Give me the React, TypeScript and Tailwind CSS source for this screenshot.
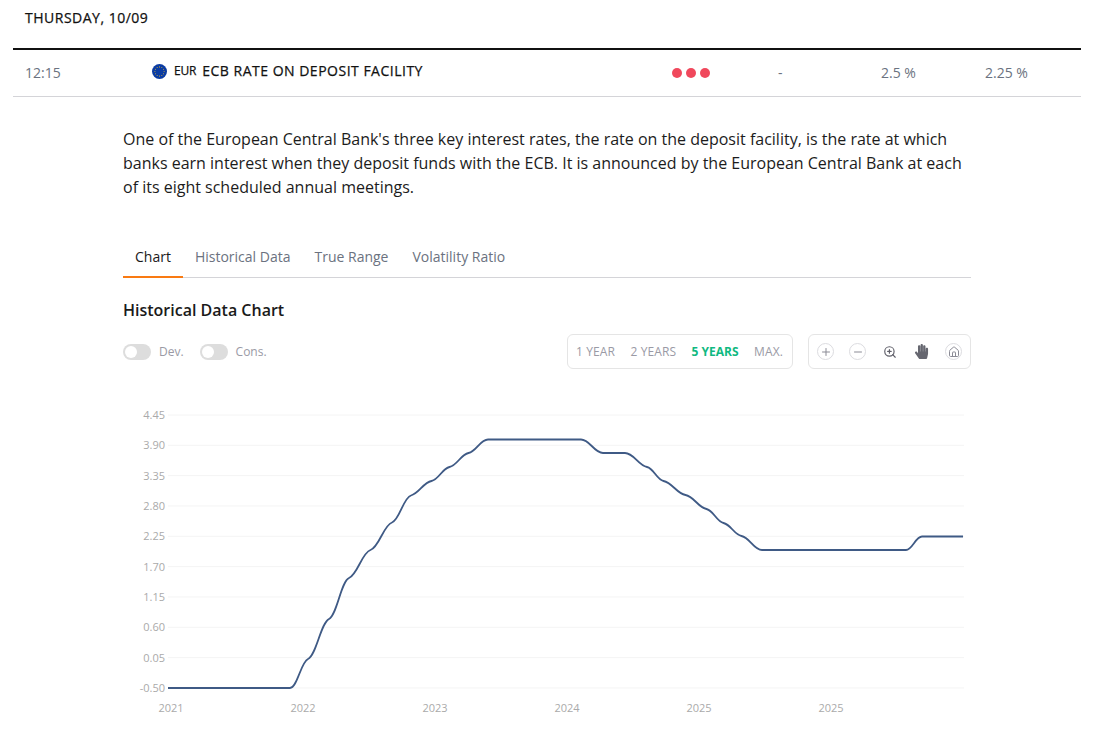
import { House, Minus, Plus, ZoomIn } from 'lucide-react';
import { FaHandPaper } from 'react-icons/fa';

const TABS = ['Chart', 'Historical Data', 'True Range', 'Volatility Ratio'];
const RANGES = ['1 YEAR', '2 YEARS', '5 YEARS', 'MAX.'];
const Y_LABELS = ['4.45', '3.90', '3.35', '2.80', '2.25', '1.70', '1.15', '0.60', '0.05', '-0.50'];
const X_LABELS = [
  { x: 171, label: '2021' },
  { x: 303, label: '2022' },
  { x: 435, label: '2023' },
  { x: 567, label: '2024' },
  { x: 699, label: '2025' },
  { x: 831, label: '2025' },
];

// shelves of the rate line, in page pixels
const LINE: [number, number][] = [
  [168, 688], [290, 688], [308, 659], [329, 619], [349, 578], [370.5, 550], [392, 522.5], [411, 495.5],
  [431.5, 481], [449.5, 467], [468.5, 453], [488, 439.5], [581, 439.5], [603, 453], [625, 453],
  [647, 467], [663.5, 481], [685.5, 495], [706.5, 509], [723.5, 523], [741.5, 536], [762, 550],
  [906, 550], [922, 536.5], [963, 536.5],
];

function linePath(points: [number, number][]) {
  const slopes = points.slice(1).map(([x, y], i) => (y - points[i][1]) / (x - points[i][0]));
  const tangent = (i: number) => {
    if (i === 0 || i === points.length - 1) return 0;
    const a = slopes[i - 1];
    const b = slopes[i];
    return a * b > 0 ? ((a + b) / 2) * 0.25 : 0;
  };
  let d = `M${points[0][0]} ${points[0][1]}`;
  for (let i = 1; i < points.length; i++) {
    const [x0, y0] = points[i - 1];
    const [x1, y1] = points[i];
    const h = (x1 - x0) * 0.4;
    d += ` C${x0 + h} ${y0 + h * tangent(i - 1)} ${x1 - h} ${y1 - h * tangent(i)} ${x1} ${y1}`;
  }
  return d;
}

function EuFlag() {
  const stars = Array.from({ length: 12 }, (_, i) => {
    const a = (i * Math.PI) / 6;
    return <circle key={i} cx={7.5 + 4.6 * Math.cos(a)} cy={7.5 + 4.6 * Math.sin(a)} r={0.55} fill="#c9a93a" />;
  });
  return (
    <svg width="15" height="15" viewBox="0 0 15 15" className="shrink-0">
      <circle cx="7.5" cy="7.5" r="7.5" fill="#0b3ca3" />
      {stars}
    </svg>
  );
}

function Toggle({ label }: { label: string }) {
  return (
    <div className="flex items-center gap-2">
      <div className="flex h-4 w-7 items-center rounded-full bg-[#dddddd] pl-[2px]">
        <div className="h-3 w-3 rounded-full bg-white" />
      </div>
      <span className="text-xs text-[#9a9aa5]">{label}</span>
    </div>
  );
}

function RoundIcon({ children }: { children: React.ReactNode }) {
  return (
    <div className="flex h-[17px] w-[17px] items-center justify-center rounded-full border border-[#dcdce0] text-[#8b8b95]">
      {children}
    </div>
  );
}

function RateChart() {
  return (
    <svg width="848" height="330" viewBox="123 400 848 330" className="block">
      {Y_LABELS.map((label, i) => {
        const y = 415 + i * 30.33;
        return (
          <g key={label}>
            <line x1="168" x2="964" y1={y} y2={y} stroke="#f4f4f4" strokeWidth="1" />
            <text x="165" y={y + 4} textAnchor="end" fontSize="11" fill="#aaaaaa">{label}</text>
          </g>
        );
      })}
      {X_LABELS.map(({ x, label }, i) => (
        <text key={i} x={x} y="712" textAnchor="middle" fontSize="11" fill="#aaaaaa">{label}</text>
      ))}
      <path d={linePath(LINE)} fill="none" stroke="#3f5a85" strokeWidth="1.8" />
    </svg>
  );
}

export default function App() {
  return (
    <div className="h-[739px] overflow-hidden bg-white font-['Open_Sans',sans-serif] text-[#1a1a1a]">
      <div className="flex h-[48px] items-start pl-[25px] pt-[8px]">
        <span className="text-sm font-medium leading-5 tracking-[0.5px] text-[#111111] [-webkit-text-stroke:0.25px_#111111]">THURSDAY, 10/09</span>
      </div>

      <div className="mx-[13px] flex h-[49px] w-[1068px] items-center border-t-2 border-b border-t-[#111111] border-b-[#d4d4d8] text-sm text-[#6b7280]">
        <span className="ml-3 w-[127px]">12:15</span>
        <div className="flex w-[520px] items-center -translate-y-[2px]">
          <EuFlag />
          <span className="ml-[7px] text-xs font-medium tracking-[-0.2px] text-[#111111] [-webkit-text-stroke:0.25px_#111111]">EUR</span>
          <span className="ml-[6px] text-sm font-medium tracking-[0.5px] text-[#111111] [-webkit-text-stroke:0.25px_#111111]">ECB RATE ON DEPOSIT FACILITY</span>
        </div>
        <div className="flex w-[106px] gap-[4px]">
          <div className="h-[10px] w-[10px] rounded-full bg-[#f0485c]" />
          <div className="h-[10px] w-[10px] rounded-full bg-[#f0485c]" />
          <div className="h-[10px] w-[10px] rounded-full bg-[#f0485c]" />
        </div>
        <span className="w-[103px]">-</span>
        <span className="w-[104px]">2.5 %</span>
        <span>2.25 %</span>
      </div>

      <div className="ml-[123px] w-[848px]">
        <p className="mt-[30px] text-base leading-6 text-[#1c1c1c]">
          One of the European Central Bank's three key interest rates, the rate on the deposit facility, is the rate at which banks earn interest when they deposit funds with the ECB. It is announced by the European Central Bank at each of its eight scheduled annual meetings.
        </p>

        <div className="mt-[37px] flex h-[42px] border-b border-[#d4d4d8] text-sm">
          {TABS.map((tab, i) => (
            <div
              key={tab}
              className={i === 0
                ? '-mb-px flex items-center border-b-2 border-[#f97a12] px-3 pt-[2px] text-[#1a1a1a]'
                : '-mb-px flex items-center border-b-2 border-transparent px-3 pt-[2px] text-[#6b7280]'}
            >
              {tab}
            </div>
          ))}
        </div>

        <h2 className="mt-[20px] text-base font-semibold leading-6">Historical Data Chart</h2>

        <div className="mt-3 flex h-[35px] items-center">
          <div className="flex gap-4">
            <Toggle label="Dev." />
            <Toggle label="Cons." />
          </div>
          <div className="ml-auto flex h-[35px] w-[226px] items-center justify-between rounded-md border border-[#e5e5e5] pl-2 pr-[9px] text-xs text-[#9a9aa5]">
            {RANGES.map(range => (
              <span key={range} className={range === '5 YEARS' ? 'font-bold text-[#10b981]' : 'tracking-[0.1px]'}>{range}</span>
            ))}
          </div>
          <div className="ml-[15px] flex h-[35px] w-[163px] items-center justify-between rounded-md border border-[#e5e5e5] px-2">
            <RoundIcon><Plus size={12} /></RoundIcon>
            <RoundIcon><Minus size={12} /></RoundIcon>
            <div className="flex w-[17px] justify-center"><ZoomIn size={14} className="text-[#5f5f69]" /></div>
            <div className="flex w-[17px] justify-center"><FaHandPaper size={15} className="text-[#666770]" /></div>
            <RoundIcon><House size={12} /></RoundIcon>
          </div>
        </div>

        <div className="mt-[31px]">
          <RateChart />
        </div>
      </div>
    </div>
  );
}
